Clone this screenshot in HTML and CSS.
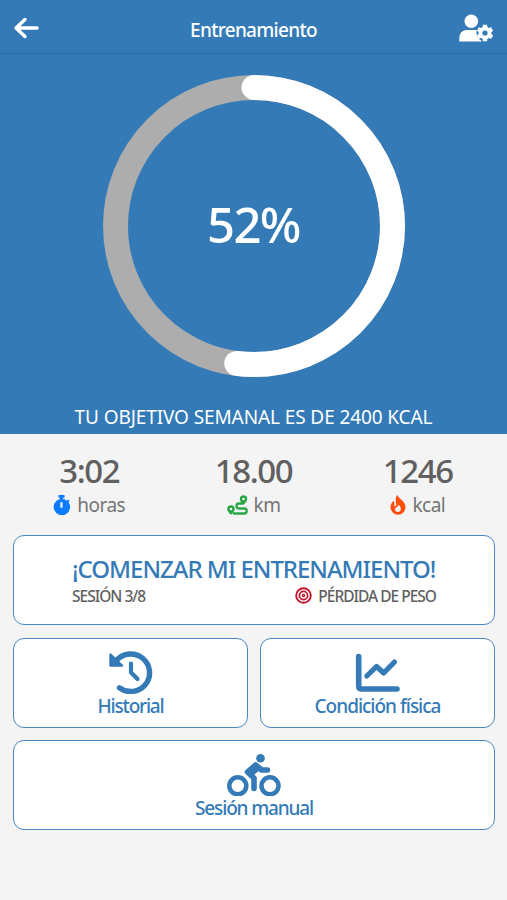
FILE: index.html
```html
<!DOCTYPE html>
<html lang="es">
<head>
  <meta charset="UTF-8">
  <meta name="viewport" content="width=device-width, initial-scale=1.0">
  <title>Entrenamiento</title>
  <link rel="stylesheet" href="styles.css">
</head>
<body>

<!-- Cabecera -->
<header class="topbar">
  <a class="topbar-btn back" href="#" aria-label="Volver">
    <svg width="28" height="24" viewBox="0 0 28 24" fill="none" stroke="currentColor" stroke-width="3.4" stroke-linecap="round" stroke-linejoin="round">
      <path d="M25 12H4M13 3.500L4 12l9 8.500"/>
    </svg>
  </a>
  <h1>Entrenamiento</h1>
  <a class="topbar-btn user" href="#" aria-label="Perfil">
    <svg width="34" height="28" viewBox="0 0 34 28">
      <circle cx="12.300" cy="7.200" r="6.800" fill="currentColor"/>
      <path fill="currentColor" d="M.3 27.500v-3.200C.3 19.500 3.500 16 8 16h8.600c1 0 1.900.2 2.700.6l3.700 10.900z"/>
      <circle class="gear-gap" cx="26" cy="19" r="8.600"/>
      <g fill="none" stroke="currentColor">
        <circle cx="26" cy="19" r="4.500" stroke-width="3.800"/>
        <path stroke-width="4.400" d="M26 10.800v3.700M26 23.500v3.700M18.900 14.900l3.200 1.900M29.900 21.200l3.200 1.900M33.100 14.900l-3.200 1.900M22.100 21.200l-3.200 1.900"/>
      </g>
    </svg>
  </a>
</header>

<!-- Objetivo semanal -->
<section class="goal">
  <svg class="ring" width="304" height="304" viewBox="0 0 304 304">
    <circle class="ring-track" cx="152" cy="152" r="138.500"/>
    <circle class="ring-value" cx="152" cy="152" r="138.500" pathLength="100" stroke-dasharray="52 100" transform="rotate(-90 152 152)"/>
    <text class="ring-text" x="151.500" y="168.500">52%</text>
  </svg>
  <p class="goal-text">TU OBJETIVO SEMANAL ES DE 2400 KCAL</p>
</section>

<!-- Resumen -->
<section class="stats">
  <div class="stat">
    <div class="stat-value">3:02</div>
    <div class="stat-label">
      <svg class="blue" width="18" height="20" viewBox="0 0 18 20" fill="currentColor">
        <path fill-rule="evenodd" d="M5.500 0h6v2.700h-1.400v1.400c1.400.2 2.700.8 3.800 1.600l1.300-1.300 1.500 1.500-1.200 1.300A8.200 8.200 0 1 1 6.900 4.100V2.700H5.500zM7.400 7.200v5.600h2.200V7.200z"/>
      </svg>
      <span>horas</span>
    </div>
  </div>
  <div class="stat">
    <div class="stat-value">18.00</div>
    <div class="stat-label">
      <svg class="green" width="21" height="20" viewBox="0 0 21 20">
        <path fill="currentColor" fill-rule="evenodd" d="M4 10.200a3.800 3.800 0 0 1 3.800 3.800c0 2.100-3 5.600-3.800 5.600S.2 16.100.2 14A3.800 3.800 0 0 1 4 10.200zm0 2.500a1.300 1.300 0 1 0 0 2.600 1.300 1.300 0 0 0 0-2.600zM16.500.2A3.700 3.700 0 0 1 20.200 4c0 2-2.800 5.400-3.700 5.400S12.800 6 12.800 4A3.700 3.700 0 0 1 16.500.2zm0 2.500a1.300 1.300 0 1 0 0 2.600 1.300 1.300 0 0 0 0-2.600z"/>
        <path fill="none" stroke="currentColor" stroke-width="2.300" d="M6 18.500h11.200a2.500 2.500 0 0 0 0-5H12a2.500 2.500 0 0 1 0-5h4.500"/>
      </svg>
      <span>km</span>
    </div>
  </div>
  <div class="stat">
    <div class="stat-value">1246</div>
    <div class="stat-label">
      <svg class="orange" width="16" height="20" viewBox="0 0 16 20" fill="currentColor">
        <path fill-rule="evenodd" d="M7.600 0C8 3.600 15.500 5.800 15.500 12.200A7.500 7.500 0 0 1 .5 12.200C.5 9.800 1.700 7.900 2.900 6.600c.6-.6 1.400-.2 1.400.6v3.300c0 1 1.900 1 1.900-.4C6.200 6.800 4.400 3 7.600 0zM8.500 9.500c.2 2.300-3.500 2.700-3.500 4.600a2.900 2.900 0 0 0 5.800 0c0-1.800-.9-3.500-2.300-4.600z"/>
      </svg>
      <span>kcal</span>
    </div>
  </div>
</section>

<!-- Acciones -->
<main class="actions">
  <a class="card start" href="#">
    <div class="start-inner">
      <div class="start-title">¡COMENZAR MI ENTRENAMIENTO!</div>
      <div class="start-info">
        <span class="session">SESIÓN 3/8</span>
        <span class="target">
          <svg width="17" height="17" viewBox="0 0 17 17" fill="none" stroke="#c5162e">
            <circle cx="8.500" cy="8.500" r="7.300" stroke-width="1.900"/>
            <circle cx="8.500" cy="8.500" r="4.100" stroke-width="1.700"/>
            <circle cx="8.500" cy="8.500" r="1.100" stroke-width="1.400"/>
          </svg>
          <span>PÉRDIDA DE PESO</span>
        </span>
      </div>
    </div>
  </a>

  <a class="card" href="#">
    <svg width="46" height="44" viewBox="0 0 46 44" fill="none" stroke="currentColor" stroke-linecap="round" stroke-linejoin="round">
      <path stroke-width="5.400" d="M8.500 10.500A18.800 18.800 0 1 1 11.500 37.800"/>
      <path fill="currentColor" stroke-width="2.400" d="M2.500 4.500V15.500H14z"/>
      <path stroke-width="4.200" d="M23 13.500V22.500L29.500 29"/>
    </svg>
    <span class="card-label historial">Historial</span>
  </a>

  <a class="card" href="#">
    <svg width="46" height="44" viewBox="0 0 46 44" fill="none" stroke="currentColor" stroke-linecap="round" stroke-linejoin="round">
      <path stroke-width="5.600" d="M3.700 6.500V36Q3.700 39 6.700 39H42"/>
      <path stroke-width="5.200" d="M11.800 26L21.500 16.500L28.700 23L39.500 12"/>
    </svg>
    <span class="card-label condicion">Condición física</span>
  </a>

  <a class="card wide" href="#">
    <svg width="54" height="44" viewBox="0 0 54 44" fill="none" stroke="currentColor" stroke-linecap="round" stroke-linejoin="round">
      <circle cx="10.800" cy="33.800" r="8.500" stroke-width="4.500"/>
      <circle cx="43" cy="33.800" r="8.500" stroke-width="4.500"/>
      <circle cx="33.500" cy="6.200" r="4.300" fill="currentColor" stroke="none"/>
      <path stroke-width="5.600" d="M27 36.500V26L20.500 20L28.500 13L34.500 18H40.500"/>
      <path fill="currentColor" stroke-width="2" d="M20 19L29 12L33 16.500L26 22.500z"/>
    </svg>
    <span class="card-label manual">Sesión manual</span>
  </a>
</main>

</body>
</html>
```
FILE: styles.css
```css
* {
  margin: 0;
  padding: 0;
  box-sizing: border-box;
}

body {
  min-height: 100vh;
  font-family: "Noto Sans", sans-serif;
  background-color: #f4f4f4;
  color: #606060;
  white-space: nowrap;
}

a {
  color: inherit;
  text-decoration: none;
}

svg {
  display: block;
  flex-shrink: 0;
}

/* --- CABECERA --- */
.topbar {
  display: flex;
  align-items: center;
  justify-content: space-between;
  height: 54px;
  padding: 0 14px 0 12px;
  background-color: #337ab7;
  border-bottom: 1px solid #2a6da0;
  color: #fff;
}

.topbar-btn {
  display: flex;
  width: 34px;
  padding-top: 2px;
}

.topbar h1 {
  padding: 7px 0 0 2px;
  font-size: 19px;
  font-weight: 500;
  letter-spacing: -0.7px;
}

.gear-gap {
  fill: #337ab7;
}

/* --- OBJETIVO SEMANAL --- */
.goal {
  display: flex;
  flex-direction: column;
  align-items: center;
  height: 380px;
  padding-top: 20px;
  background-color: #337ab7;
  color: #fff;
}

.ring circle {
  fill: none;
  stroke-width: 25;
}

.ring .ring-track {
  stroke: #adadad;
}

.ring .ring-value {
  stroke: #fff;
  stroke-linecap: round;
}

.ring-text {
  fill: #fff;
  font-size: 49px;
  font-weight: 500;
  letter-spacing: -1.6px;
  text-anchor: middle;
}

.goal-text {
  margin-top: 26px;
  font-size: 19px;
  line-height: 26px;
  letter-spacing: -0.1px;
}

/* --- RESUMEN --- */
.stats {
  display: grid;
  grid-template-columns: repeat(3, 1fr);
  height: 101px;
  padding: 17px 7px 0;
}

.stat {
  display: flex;
  flex-direction: column;
  align-items: center;
}

.stat-value {
  font-size: 33px;
  font-weight: 500;
  line-height: 40px;
  letter-spacing: -1.4px;
}

.stat-label {
  display: flex;
  align-items: center;
  gap: 6px;
  font-size: 19px;
  line-height: 28px;
  letter-spacing: -0.5px;
  color: #747474;
}

.blue {
  color: #0b7bff;
}

.green {
  color: #28a745;
}

.orange {
  color: #ff4d0a;
}

/* --- ACCIONES --- */
.actions {
  display: grid;
  grid-template-columns: 1fr 1fr;
  gap: 12.500px 12px;
  padding: 0 12px 0 13px;
}

.card {
  display: flex;
  flex-direction: column;
  align-items: center;
  height: 90px;
  padding-top: 11px;
  background-color: #fff;
  border: 1px solid #4a89c0;
  border-radius: 11px;
  color: #337ab7;
}

.start,
.wide {
  grid-column: span 2;
}

.start {
  padding-top: 18px;
}

.start-inner {
  width: 364px;
}

.start-title {
  font-size: 24px;
  font-weight: 500;
  line-height: 30px;
  letter-spacing: -1.03px;
}

.start-info {
  display: flex;
  justify-content: space-between;
  align-items: center;
  height: 23px;
  font-size: 15.500px;
  font-weight: 500;
  letter-spacing: -1px;
  color: #606060;
}

.target {
  display: flex;
  align-items: center;
  gap: 6px;
}

.card-label {
  font-size: 19px;
  font-weight: 500;
  line-height: 24px;
}

.historial {
  letter-spacing: -1.2px;
}

.condicion {
  letter-spacing: -1px;
}

.manual {
  letter-spacing: -1.15px;
}
```
